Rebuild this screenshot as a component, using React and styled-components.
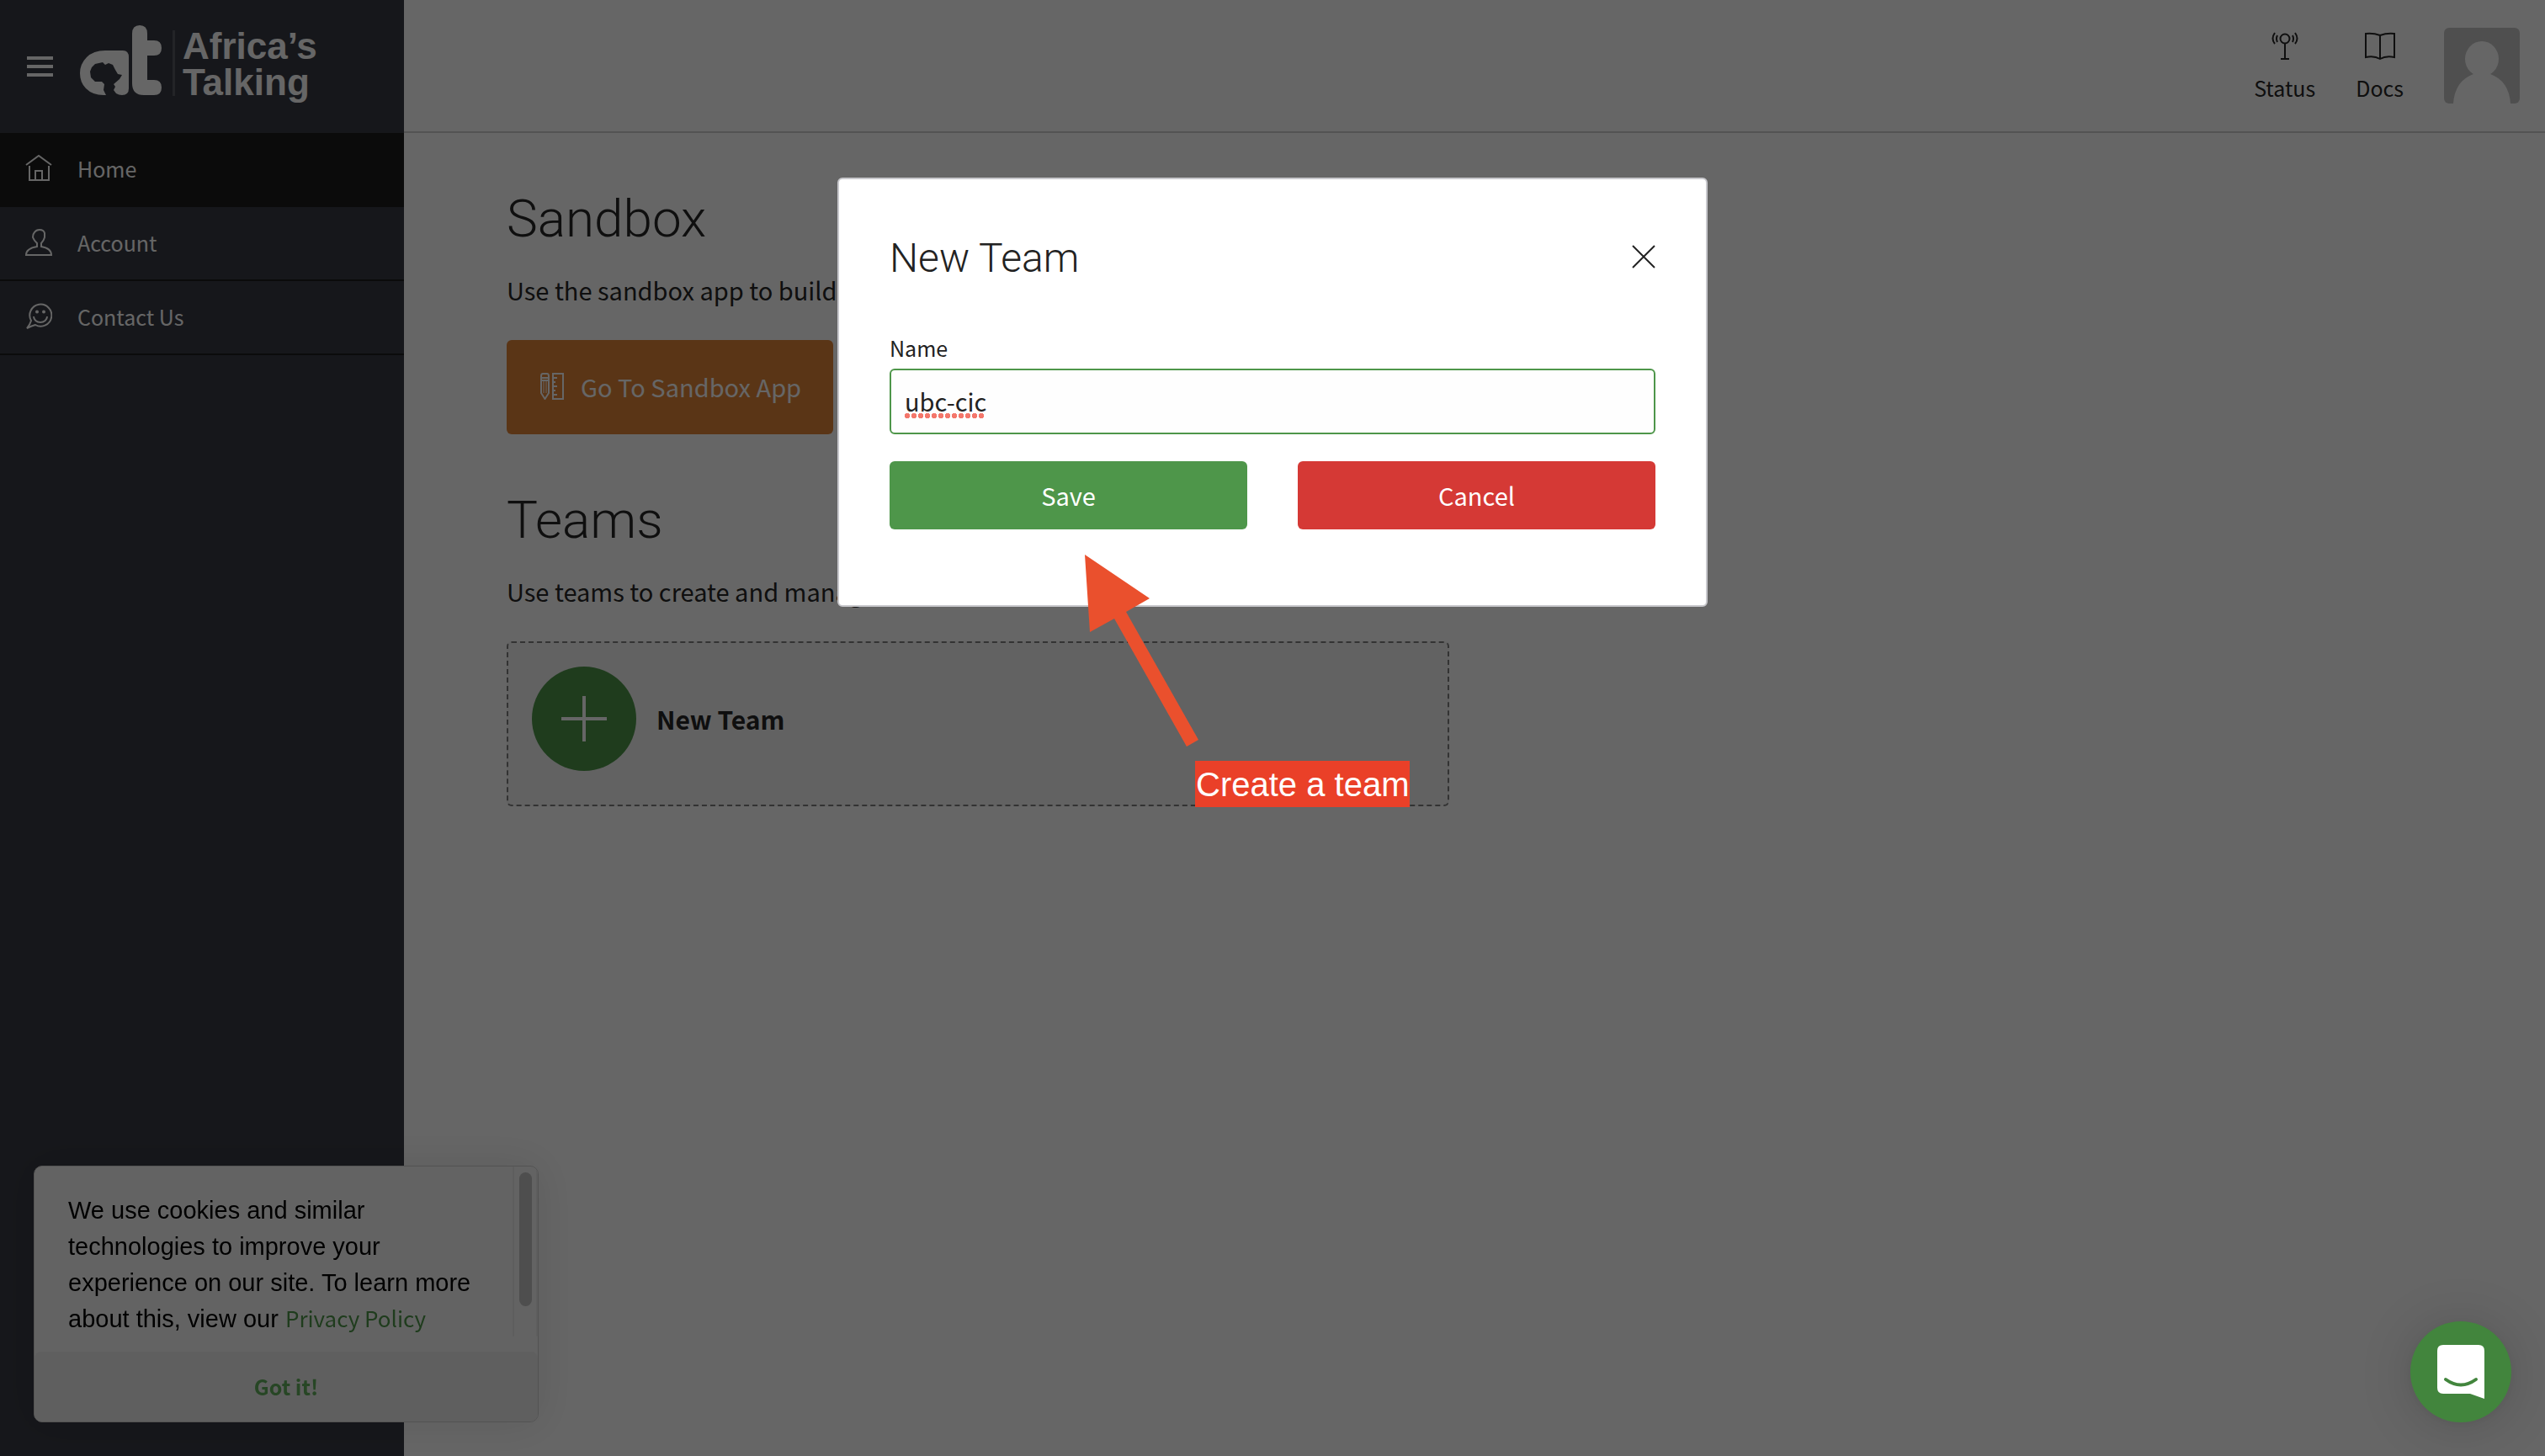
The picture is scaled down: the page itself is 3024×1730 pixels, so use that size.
import React, { useState } from "react";
import styled, { createGlobalStyle, css } from "styled-components";

const sans = `"Noto Sans CJK SC", "Noto Sans", sans-serif`;
const display = `Roboto, sans-serif`;
const helvetica = `"Liberation Sans", Arial, sans-serif`;

const Global = createGlobalStyle`
  *, *::before, *::after { box-sizing: border-box; }
  body { margin: 0; background: #fff; color: #262626; font: 400 29px/44px ${sans}; }
  h1, h2, p, ul { margin: 0; padding: 0; }
  button, input { font: inherit; color: inherit; margin: 0; }
  a { color: inherit; text-decoration: none; }
  svg { display: block; flex: none; }
`;

const Shell = styled.div`
  display: grid;
  grid-template-columns: 480px minmax(0, 1fr);
  min-height: 100vh;
`;

const Sidebar = styled.aside`
  background: #383b45;
  color: #fff;
`;

const Brand = styled.div`
  display: flex;
  align-items: flex-start;
  gap: 32px;
  height: 158px;
  padding: 30px 30px 0 32px;
`;

const MenuButton = styled.button`
  display: grid;
  align-content: center;
  gap: 6px;
  width: 31px;
  height: 98px;
  padding: 0;
  border: 0;
  background: none;
`;

const MenuBar = styled.span`
  height: 4px;
  background: #fff;
`;

const NavList = styled.ul`
  list-style: none;
`;

const NavLink = styled.a`
  display: flex;
  align-items: center;
  gap: 30px;
  height: 88px;
  padding: 0 30px 2px;
  border-bottom: 2px solid #1c1c1c;
  font-size: 25px;
  background: ${(p) => (p.$active ? "#1c1c1c" : "transparent")};
`;

const Content = styled.div`
  display: flex;
  flex-direction: column;
`;

const TopBar = styled.header`
  display: flex;
  align-items: center;
  justify-content: flex-end;
  gap: 48px;
  height: 158px;
  padding-right: 30px;
  border-bottom: 2px solid #cfcfcf;
`;

const TopLink = styled.a`
  display: grid;
  justify-items: center;
  gap: 14px;
  padding-top: 4px;
  font-size: 25px;
  line-height: 36px;
`;

const Avatar = styled.svg`
  width: 90px;
  height: 90px;
  border-radius: 6px;
  background: #c6c6c6;
`;

const Page = styled.main`
  padding: 60px 122px;
`;

const Section = styled.section`
  display: grid;
  justify-items: start;
  margin-bottom: 60px;
`;

const Heading = styled.h1`
  font: 300 62px/84px ${display};
`;

const Lead = styled.p`
  margin: 20px 0 38px;
`;

const SandboxLink = styled.a`
  display: flex;
  align-items: center;
  gap: 20px;
  height: 112px;
  padding: 0 38px 2px 40px;
  border-radius: 6px;
  background: #e18437;
  color: #fff;
`;

const TeamCard = styled.button`
  display: flex;
  align-items: center;
  gap: 24px;
  width: 100%;
  max-width: 1120px;
  padding: 28px 28px 40px;
  border: 2px dashed #808080;
  border-radius: 6px;
  background: #f4f4f4;
  font-size: 30px;
  font-weight: 700;
`;

const Plus = styled.span`
  display: grid;
  place-items: center;
  width: 124px;
  height: 124px;
  border-radius: 50%;
  background: #4e964a;
`;

const Cookie = styled.aside`
  position: fixed;
  left: 40px;
  bottom: 40px;
  width: 600px;
  border: 1px solid #d0d0d0;
  border-radius: 10px;
  overflow: hidden;
  background: #f8f8f8;
  box-shadow: 0 0 50px rgba(0, 0, 0, 0.1);
`;

const CookieBody = styled.div`
  display: flex;
  height: 220px;
  padding-bottom: 18px;
`;

const CookieText = styled.p`
  flex: 1;
  padding: 31px 30px 0 40px;
  color: #000;
  font: 400 29px/43px ${helvetica};
`;

const PolicyLink = styled.a`
  color: #4e964a;
  font: 400 26px/36px ${sans};
`;

const Track = styled.div`
  width: 30px;
  padding: 7px 5px 0 6px;
  border: solid #eaeaea;
  border-width: 0 2px;
`;

const Thumb = styled.div`
  height: 159px;
  border-radius: 8px;
  background: #c2c2c2;
`;

const CookieButton = styled.button`
  display: block;
  width: 100%;
  height: 83px;
  padding: 0 0 2px;
  border: 0;
  border-radius: 8px;
  background: #ededed;
  color: #62b05c;
  font-size: 25px;
  font-weight: 700;
`;

const Overlay = styled.div`
  position: fixed;
  inset: 0;
  display: flex;
  align-items: flex-start;
  justify-content: center;
  padding-top: 211px;
  background: rgba(0, 0, 0, 0.6);
`;

const Dialog = styled.form`
  position: relative;
  width: 1034px;
  padding: 60px 60px 90px;
  border: 2px solid #c8c8cc;
  border-radius: 6px;
  background: #fff;
  color: #222;
`;

const DialogHead = styled.div`
  display: flex;
  align-items: center;
  justify-content: space-between;
  margin-bottom: 52px;
`;

const DialogTitle = styled.h2`
  font: 300 48px/68px ${display};
`;

const CloseButton = styled.button`
  padding: 0 0 4px;
  border: 0;
  background: none;
`;

const Label = styled.label`
  display: block;
  font-size: 25px;
  line-height: 40px;
  margin-bottom: 5px;
`;

const Field = styled.div`
  position: relative;
  margin-bottom: 32px;

  &::after {
    content: "";
    position: absolute;
    left: 18px;
    top: 53px;
    width: 96px;
    height: 6px;
    background: radial-gradient(circle at 3px 3px, #f4776b 3px, transparent 3px) 0 0 / 8px 6px;
  }
`;

const TextInput = styled.input`
  display: block;
  width: 100%;
  height: 78px;
  padding: 0 16px 2px;
  border: 2px solid #4e964a;
  border-radius: 6px;
  outline: none;
  background: #fefefe;
`;

const Actions = styled.div`
  display: grid;
  grid-template-columns: 1fr 1fr;
  gap: 60px;
`;

const tones = {
  save: css`background: #4e964a;`,
  cancel: css`background: #d53935;`,
};

const ActionButton = styled.button`
  height: 81px;
  padding: 0 0 2px;
  border: 0;
  border-radius: 6px;
  color: #fff;
  ${(p) => tones[p.$tone]}
`;

const Arrow = styled.svg`
  position: absolute;
  left: 292px;
  top: 446px;
`;

const Callout = styled.span`
  position: absolute;
  left: 423px;
  top: 691px;
  padding: 1px 1px 0;
  background: #ea4028;
  color: #fff;
  font: 400 40px/54px ${helvetica};
  white-space: nowrap;
`;

const Launcher = styled.button`
  position: fixed;
  right: 40px;
  bottom: 40px;
  display: grid;
  place-items: center;
  width: 120px;
  height: 120px;
  padding: 0;
  border: 0;
  border-radius: 50%;
  background: #42853d;
  box-shadow: 0 2px 12px rgba(0, 0, 0, 0.06), 0 4px 64px rgba(0, 0, 0, 0.16);
`;

const line = { fill: "none", stroke: "currentColor", strokeWidth: 2 };

const Logo = () => (
  <svg width="290" height="98" viewBox="0 0 290 98" role="img" aria-label="Africa's Talking" fill="#fff">
    <path d="M31 83Q16 84 7 75Q0 68 0 57Q0 46 8 38Q16 30 30 30H51Q58 30 58 38V75Q58 83 50 83Q46 83 43 81L40 77L42 73L40 70L47 64L50 59L45 58L42 53L39 47L34 45L30 47L27 44L18 46L14 50L12 55L13 62L18 67L26 67L29 70L28 77Z" />
    <path d="M62 10Q62 0 71 0Q80 0 80 10V18H88Q97 18 97 27Q97 36 88 36H80V65H88Q97 65 97 74Q97 83 88 83H76Q62 83 62 69Z" />
    <path d="M110 6h3v78h-3z" fill="#585b63" />
    <text x="122" y="40" fontFamily={helvetica} fontWeight="700" fontSize="44">Africa’s</text>
    <text x="122" y="83" fontFamily={helvetica} fontWeight="700" fontSize="44">Talking</text>
  </svg>
);

const HomeIcon = () => (
  <svg width="32" height="32" viewBox="0 0 32 32" {...line}>
    <path d="M1 12L16 1L31 12M5 13V30H28V13M12 30V19H20V30" />
  </svg>
);

const UserIcon = () => (
  <svg width="32" height="32" viewBox="0 0 32 32" {...line}>
    <path d="M1 31C1 25 8 22 14 21V17Q10 13 9 10Q9 6 11 4Q13 1 17 1Q22 1 23 5V10Q22 14 19 17V21C25 22 31 25 31 31Z" />
  </svg>
);

const SmileIcon = () => (
  <svg width="32" height="32" viewBox="0 0 32 32" {...line}>
    <path d="M7 21A13 13 0 1 1 12 26Q8 27 2 30Q6 25 7 21ZM10 16A8 7 0 0 0 26 16" />
    <circle cx="14" cy="10.500" r="2" fill="currentColor" stroke="none" />
    <circle cx="22" cy="10.500" r="2" fill="currentColor" stroke="none" />
  </svg>
);

const StatusIcon = () => (
  <svg width="32" height="34" viewBox="0 0 32 34" {...line}>
    <circle cx="16" cy="8" r="5.500" />
    <path d="M16 14V32M11 32H21M7 4Q5 8 7 12M4 1Q-1 8 4 14M25 4Q27 8 25 12M28 1Q33 8 28 14" />
  </svg>
);

const BookIcon = () => (
  <svg width="36" height="34" viewBox="0 0 36 34" {...line}>
    <path d="M18 4Q10 1 1 2V30Q11 28 18 32Q25 28 35 30V2Q26 1 18 4V32" />
  </svg>
);

const ToolsIcon = () => (
  <svg width="28" height="32" viewBox="0 0 28 32" {...line}>
    <path d="M1 4Q1 1 3 1H8Q10 1 10 4V24L5.500 31L1 24ZM1 6H10M1 9H10M15 1H27V31H15ZM15 6H20M15 11H18M15 16H20M15 21H18M15 26H20" />
    <path d="M4 10V24M7 10V24" strokeWidth="1" />
  </svg>
);

const nav = [
  { label: "Home", Icon: HomeIcon, active: true },
  { label: "Account", Icon: UserIcon },
  { label: "Contact Us", Icon: SmileIcon },
];

export default function App() {
  const [name, setName] = useState("ubc-cic");
  return (
    <>
      <Global />
      <Shell>
        <Sidebar>
          <Brand>
            <MenuButton type="button" aria-label="Menu">
              <MenuBar /><MenuBar /><MenuBar />
            </MenuButton>
            <Logo />
          </Brand>
          <nav>
            <NavList>
              {nav.map(({ label, Icon, active }) => (
                <li key={label}>
                  <NavLink href="#" $active={active}><Icon />{label}</NavLink>
                </li>
              ))}
            </NavList>
          </nav>
        </Sidebar>
        <Content>
          <TopBar>
            <TopLink href="#"><StatusIcon />Status</TopLink>
            <TopLink href="#"><BookIcon />Docs</TopLink>
            <Avatar viewBox="0 0 90 90" fill="#fff" role="img" aria-label="Profile">
              <ellipse cx="45" cy="37" rx="20" ry="21" />
              <path d="M11 90Q13 63 35 55H55Q77 63 79 90Z" />
            </Avatar>
          </TopBar>
          <Page>
            <Section>
              <Heading>Sandbox</Heading>
              <Lead>Use the sandbox app to build</Lead>
              <SandboxLink href="#"><ToolsIcon />Go To Sandbox App</SandboxLink>
            </Section>
            <Section>
              <Heading as="h2">Teams</Heading>
              <Lead>Use teams to create and manage</Lead>
              <TeamCard type="button">
                <Plus>
                  <svg width="54" height="54" viewBox="0 0 54 54" stroke="#fff" strokeWidth="4">
                    <path d="M27 0V54M0 27H54" />
                  </svg>
                </Plus>
                New Team
              </TeamCard>
            </Section>
          </Page>
        </Content>
      </Shell>
      <Cookie>
        <CookieBody>
          <CookieText>
            We use cookies and similar technologies to improve your experience on our site. To learn more about this, view our <PolicyLink href="#">Privacy Policy</PolicyLink>
          </CookieText>
          <Track><Thumb /></Track>
        </CookieBody>
        <CookieButton type="button">Got it!</CookieButton>
      </Cookie>
      <Overlay>
        <Dialog role="dialog" aria-labelledby="dialog-title" onSubmit={(e) => e.preventDefault()}>
          <DialogHead>
            <DialogTitle id="dialog-title">New Team</DialogTitle>
            <CloseButton type="button" aria-label="Close">
              <svg width="28" height="28" viewBox="0 0 28 28" {...line}>
                <path d="M1 1L27 27M27 1L1 27" />
              </svg>
            </CloseButton>
          </DialogHead>
          <Label htmlFor="team-name">Name</Label>
          <Field>
            <TextInput id="team-name" value={name} onChange={(e) => setName(e.target.value)} />
          </Field>
          <Actions>
            <ActionButton $tone="save">Save</ActionButton>
            <ActionButton type="button" $tone="cancel">Cancel</ActionButton>
          </Actions>
          <Arrow width="136" height="230" viewBox="0 0 136 230" fill="#ea502d" aria-hidden="true">
            <path d="M0 0L77 52L49 68L135 220L121 228L35 76L6 92Z" />
          </Arrow>
          <Callout>Create a team</Callout>
        </Dialog>
      </Overlay>
      <Launcher type="button" aria-label="Open chat">
        <svg width="56" height="64" viewBox="0 0 56 64">
          <path d="M7 0H49Q56 0 56 7V64L39 58H7Q0 58 0 51V7Q0 0 7 0Z" fill="#fff" />
          <path d="M10 41Q28 54 46 41" fill="none" stroke="#42853d" strokeWidth="4" strokeLinecap="round" />
        </svg>
      </Launcher>
    </>
  );
}
